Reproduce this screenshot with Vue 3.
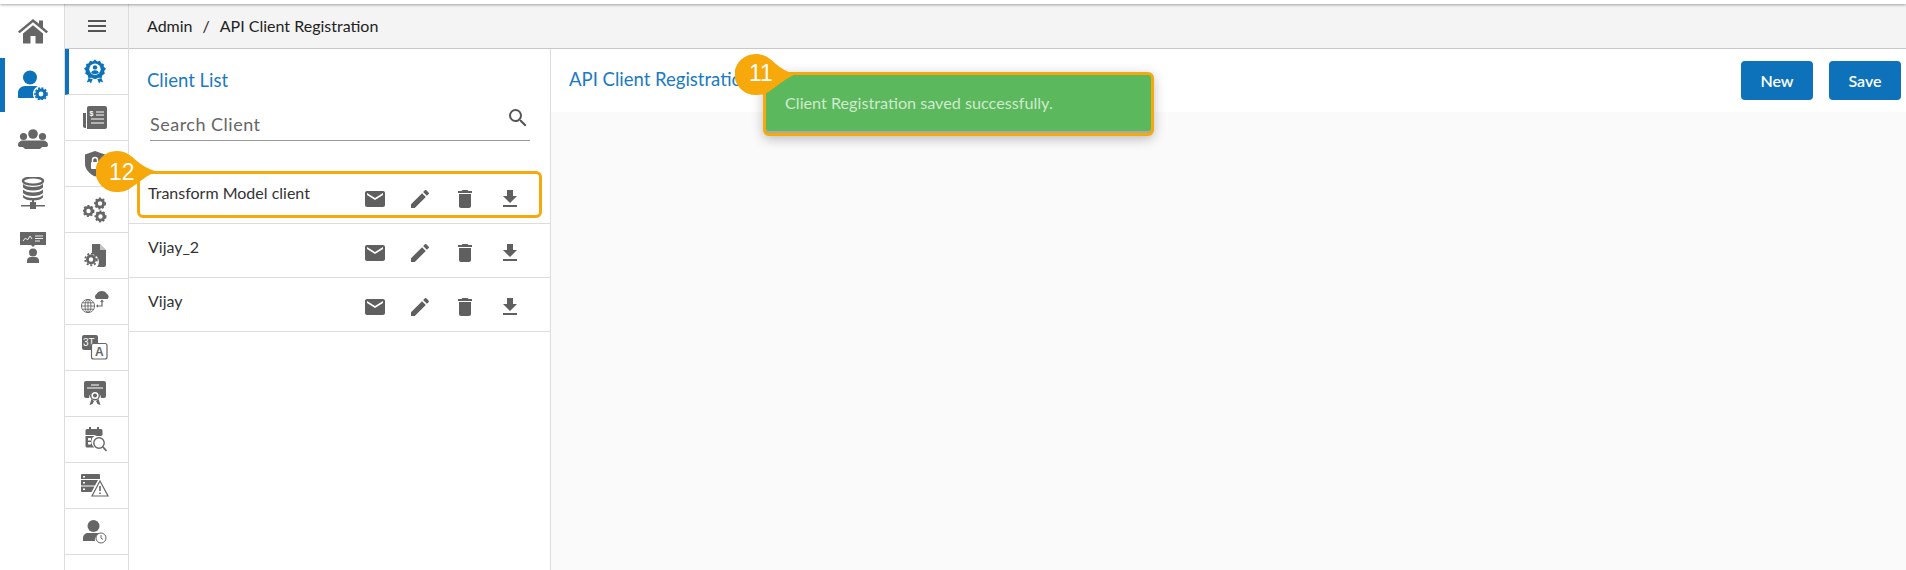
<script setup>
const clients = [
  { name: 'Transform Model client' },
  { name: 'Vijay_2' },
  { name: 'Vijay' }
]
</script>

<template>
  <div class="page">
    <div class="topline"></div>
    <div class="body">
      <aside class="rail">
        <div class="rail-item">
          <svg width="30" height="26" viewBox="0 0 30 26"><path fill="#666" d="M15 1 0 13.500l1.600 1.800L15 4.200l13.400 11.100 1.600-1.800-5-4.200V2.500h-4v3.300zM5 15.500V25.500h7.500V18h5v7.500H25V15.500L15 7.200z"/></svg>
        </div>
        <div class="rail-item active">
          <svg width="30" height="30" viewBox="0 0 30 30"><circle cx="12" cy="7.500" r="7" fill="#0d72b9"/><path fill="#0d72b9" d="M0 28v-5c0-4 3-7 7-7h10c1 0 2 .2 2.800.5A8 8 0 0 0 15 24c0 1.500.4 2.900 1 4z"/><circle cx="23" cy="24" r="4" fill="none" stroke="#0d72b9" stroke-width="3.200"/><circle cx="23" cy="24" r="6" fill="none" stroke="#0d72b9" stroke-width="1.600" stroke-dasharray="2 1.500"/></svg>
        </div>
        <div class="rail-item">
          <svg width="30" height="20" viewBox="0 0 30 20"><circle cx="15" cy="5" r="4.800" fill="#666"/><circle cx="5.500" cy="7.500" r="3.600" fill="#666"/><circle cx="24.500" cy="7.500" r="3.600" fill="#666"/><path fill="#666" d="M0 16c0-3 2.500-4.500 5-4.500h20c2.500 0 5 1.500 5 4.500 0 1.500-1 2-2.500 2h-3.500c-1 1.500-2 2-3 2h-13c-1 0-2-.5-3-2H2.500C1 18 0 17.500 0 16z"/></svg>
        </div>
        <div class="rail-item">
          <svg width="26" height="32" viewBox="0 0 26 32"><ellipse cx="13" cy="4" rx="10" ry="3.600" fill="none" stroke="#666" stroke-width="2.400"/><path fill="#666" d="M3 7c2 2 5 3 10 3s8-1 10-3v3.500c-2 2-5 3-10 3s-8-1-10-3zM3 12.500c2 2 5 3 10 3s8-1 10-3V16c-2 2-5 3-10 3s-8-1-10-3zM3 18c2 2 5 3 10 3s8-1 10-3v2.500c-2 2-5 3-10 3s-8-1-10-3z"/><path fill="#666" d="M10 25h2v-2h2v2h2v3h9v1.600h-9V32h-6v-2.400H1V28h9z"/></svg>
        </div>
        <div class="rail-item">
          <svg width="26" height="32" viewBox="0 0 26 32"><path fill="#666" d="M0 1h26v13H15l-2 2-2-2H0z"/><path fill="none" stroke="#fff" stroke-width=".9" d="M3 10l2.500-3 2 2 2.500-4 2 3"/><path fill="none" stroke="#fff" stroke-width=".9" d="M15 5h8M15 7.500h8M15 10h5"/><circle cx="13" cy="21.500" r="4" fill="#666"/><path fill="#666" d="M7 32v-2.500c0-2.500 2-3.500 4-3.500h4c2 0 4 1 4 3.500V32z"/></svg>
        </div>
      </aside>

      <aside class="subrail">
        <div class="sub-head">
          <svg width="20" height="14" viewBox="0 0 20 14"><path stroke="#555" stroke-width="1.800" d="M1 2h18M1 7h18M1 12h18"/></svg>
        </div>
        <div class="sub-item on">
          <svg width="22" height="25" viewBox="0 0 24 26"><path fill="#0d72b9" d="M12 0l2.500 2 3-.8 1.200 2.900 3 .7-.2 3.100L24 10l-2 2.500.7 3-2.700 1.500-.8 3-3.200-.2L12 21.500 8 19.800l-3.200.2-.8-3-2.700-1.500.7-3L0 10l2.500-2.100-.2-3.100 3-.7L6.500 1.200l3 .8z"/><circle cx="12" cy="10.500" r="6.200" fill="#fff"/><circle cx="12" cy="8.500" r="2.400" fill="#0d72b9"/><path fill="#0d72b9" d="M7.800 15c0-2.300 2-3.300 4.200-3.300s4.200 1 4.200 3.300c-2.500 1.200-6 1.200-8.400 0z"/><path fill="#0d72b9" d="M5 20l-2 5 3-1 1.500 2 2-4.500zM19 20l2 5-3-1-1.500 2-2-4.500z"/></svg>
        </div>
        <div class="sub-item">
          <svg width="24" height="23" viewBox="0 0 24 23"><path fill="#666" d="M0 7h3v15H2a2 2 0 0 1-2-2z"/><path fill="#666" d="M4 2a2 2 0 0 1 2-2h16a2 2 0 0 1 2 2v19a2 2 0 0 1-2 2H4z"/><path stroke="#fff" stroke-width="1.200" d="M13 6h8M13 9h8M8 13h13M8 17h13"/><text x="6.500" y="10" font-size="7" font-weight="700" fill="#fff" font-family="Liberation Sans, sans-serif">$</text></svg>
        </div>
        <div class="sub-item">
          <svg width="22" height="26" viewBox="0 0 22 26"><path fill="#666" d="M11 0l10 3.500v9c0 6-4.500 10.500-10 13-5.500-2.500-10-7-10-13v-9z"/><rect x="7" y="11" width="8" height="7" rx="1" fill="#fff"/><path fill="none" stroke="#fff" stroke-width="1.400" d="M8.500 11V9a2.500 2.500 0 0 1 5 0v2"/></svg>
        </div>
        <div class="sub-item">
          <svg width="24" height="26" viewBox="0 0 24 26"><g fill="none" stroke="#666"><circle cx="5.500" cy="14" r="3.600" stroke-width="2.800"/><circle cx="5.500" cy="14" r="5.200" stroke-width="1.600" stroke-dasharray="2 1.800"/><circle cx="17" cy="6.500" r="3.600" stroke-width="2.800"/><circle cx="17" cy="6.500" r="5.200" stroke-width="1.600" stroke-dasharray="2 1.800"/><circle cx="17.500" cy="19.500" r="3.600" stroke-width="2.800"/><circle cx="17.500" cy="19.500" r="5.200" stroke-width="1.600" stroke-dasharray="2 1.800"/></g></svg>
        </div>
        <div class="sub-item">
          <svg width="22" height="23" viewBox="0 0 22 23"><path fill="#666" d="M8 0h8l6 6v15a2 2 0 0 1-2 2h-7a8 8 0 0 0-5-13z"/><path fill="#fff" d="M16 0v6h6z" opacity=".6"/><circle cx="7" cy="15.500" r="3.600" fill="none" stroke="#666" stroke-width="2.800"/><circle cx="7" cy="15.500" r="5.800" fill="none" stroke="#666" stroke-width="1.800" stroke-dasharray="2 1.800"/></svg>
        </div>
        <div class="sub-item">
          <svg width="28" height="24" viewBox="0 0 28 24"><g fill="none" stroke="#666" stroke-width=".9"><circle cx="7" cy="16" r="6.600"/><ellipse cx="7" cy="16" rx="3" ry="6.600"/><path d="M7 9.400v13.200M.4 16h13.200M1.200 12.800h11.600M1.200 19.200h11.600"/></g><path fill="#666" d="M15 9a3.500 3.500 0 0 1 .5-5A6 6 0 0 1 26 4a3 3 0 0 1 .5 5z"/><path fill="none" stroke="#666" stroke-width="1.200" d="M21 11v5h-5"/><path fill="#666" d="M21 9.500l-2 2.200h4zM15 16l2-1.800v3.600z"/></svg>
        </div>
        <div class="sub-item">
          <svg width="26" height="25" viewBox="0 0 26 25"><rect x="0" y="0" width="16" height="15" rx="2" fill="#666"/><text x="1" y="11" font-size="10" fill="#fff" font-family="Liberation Sans, sans-serif">3T</text><rect x="9.500" y="8.500" width="15.500" height="15.500" rx="2" fill="#fff" stroke="#666" stroke-width="1.200"/><text x="13" y="21" font-size="12" font-weight="700" fill="#666" font-family="Liberation Sans, sans-serif">A</text></svg>
        </div>
        <div class="sub-item">
          <svg width="22" height="25" viewBox="0 0 22 25"><path fill="#666" d="M2 0h18a2 2 0 0 1 2 2v13a2 2 0 0 1-2 2h-3a6 6 0 0 0-12 0H2a2 2 0 0 1-2-2V2a2 2 0 0 1 2-2z"/><path stroke="#fff" stroke-width="1.200" d="M7 4h8M3 7h16"/><circle cx="11" cy="14.500" r="4.300" fill="#fff" stroke="#666" stroke-width="1.400"/><circle cx="11" cy="14.500" r="2" fill="#666"/><path fill="#666" d="M7.500 18l-2 6 3-1 1.500-3zM14.500 18l2 6-3-1-1.500-3z"/></svg>
        </div>
        <div class="sub-item">
          <svg width="23" height="25" viewBox="0 0 23 25"><path fill="#666" d="M3 2h2V0h2v2h6V0h2v2h2a1.500 1.500 0 0 1 1.500 1.500V8H1.500V3.500A1.500 1.500 0 0 1 3 2z"/><path fill="#666" d="M1.500 9h17.200a7 7 0 0 0-8.500 11.500H3A1.500 1.500 0 0 1 1.500 19z"/><path fill="#fff" d="M4 11h3v2.500H4zM8 11h3v2.500H8zM4 15h3v2.500H4zM8 15h2v2.500H8z"/><circle cx="15" cy="16" r="5.200" fill="#fff" stroke="#666" stroke-width="1.400"/><path stroke="#666" stroke-width="1.800" d="M19 20l3.500 4"/></svg>
        </div>
        <div class="sub-item">
          <svg width="28" height="23" viewBox="0 0 28 23"><path fill="#666" d="M1 0h17a1 1 0 0 1 1 1v4H0V1a1 1 0 0 1 1-1zM0 6h17l-3 5.500H0zM0 12.500h13.500L10.500 18H1a1 1 0 0 1-1-1z"/><path fill="#fff" d="M2 2h2v1.500H2zM2 8h2v1.500H2zM2 14.500h2V16H2z"/><path fill="#fff" stroke="#666" stroke-width="1.200" d="M19 7l8 15H11z"/><path stroke="#666" stroke-width="1.600" d="M19 12v5M19 18.500v1.500"/></svg>
        </div>
        <div class="sub-item">
          <svg width="24" height="24" viewBox="0 0 24 24"><circle cx="10.500" cy="6" r="6" fill="#666"/><path fill="#666" d="M0 21v-3c0-3 2.500-5 5-5h10c1 0 1.500 .2 2 .4A7 7 0 0 0 12 21z"/><circle cx="18" cy="18" r="5" fill="#fff" stroke="#666" stroke-width="1"/><path fill="none" stroke="#666" stroke-width="1" d="M18 15v3l2 1.500"/></svg>
        </div>
      </aside>

      <div class="main">
        <header class="crumbs">
          <span>Admin</span><span class="sep">/</span><span>API Client Registration</span>
        </header>
        <div class="panels">
          <section class="list-panel">
            <h2 class="list-title">Client List</h2>
            <div class="search">
              <span class="search-ph">Search Client</span>
              <svg class="search-icon" width="24" height="24" viewBox="0 0 24 24"><path fill="#555" d="M15.500 14h-.79l-.28-.27A6.470 6.470 0 0 0 16 9.500 6.500 6.500 0 1 0 9.500 16c1.610 0 3.090-.59 4.230-1.570l.27.28v.79l5 4.990L20.490 19zm-6 0C7.010 14 5 11.990 5 9.500S7.010 5 9.500 5 14 7.010 14 9.500 11.990 14 9.500 14z"/></svg>
            </div>
            <ul class="clients">
              <li v-for="c in clients" :key="c.name" class="client">
                <span class="client-name">{{ c.name }}</span>
                <div class="actions">
                  <svg width="24" height="24" viewBox="0 0 24 24"><path fill="#5f5f5f" d="M20 4H4c-1.100 0-2 .9-2 2v12c0 1.100.9 2 2 2h16c1.100 0 2-.9 2-2V6c0-1.100-.9-2-2-2zm0 4l-8 5-8-5V6l8 5 8-5z"/></svg>
                  <svg width="24" height="24" viewBox="0 0 24 24"><path fill="#5f5f5f" d="M3 17.250V21h3.750L17.810 9.940l-3.750-3.750zM20.710 7.040a1 1 0 0 0 0-1.410l-2.340-2.340a1 1 0 0 0-1.410 0l-1.830 1.830 3.750 3.750z"/></svg>
                  <svg width="24" height="24" viewBox="0 0 24 24"><path fill="#5f5f5f" d="M6 19c0 1.100.9 2 2 2h8c1.100 0 2-.9 2-2V7H6zM19 4h-3.500l-1-1h-5l-1 1H5v2h14z"/></svg>
                  <svg width="24" height="24" viewBox="0 0 24 24"><path fill="#5f5f5f" d="M19 9h-4V3H9v6H5l7 7zM5 18v2h14v-2z"/></svg>
                </div>
              </li>
            </ul>
          </section>
          <section class="detail">
            <div class="detail-bar">
              <h2 class="detail-title">API Client Registration</h2>
              <div class="btns">
                <button class="btn">New</button>
                <button class="btn">Save</button>
              </div>
            </div>
          </section>
        </div>
      </div>
    </div>

    <div class="hl-row"></div>
    <div class="toast">Client Registration saved successfully.</div>
    <svg class="badge b12" width="62" height="42" viewBox="0 0 60 42" preserveAspectRatio="none"><path fill="#f7a80a" d="M20 0C29 0 34 5 39 9.500 44 14 50 18 58 20.500 50 24 42 31 35 36 30 40 26 41 20 41A20.500 20.500 0 0 1 20 0z"/></svg>
    <span class="badge-n n12">12</span>
    <svg class="badge b11" width="62" height="42" viewBox="0 0 60 42" preserveAspectRatio="none"><path fill="#f7a80a" d="M20 0C29 0 34 5 39 9.500 44 14 50 18 58 20.500 50 24 42 31 35 36 30 40 26 41 20 41A20.500 20.500 0 0 1 20 0z"/></svg>
    <span class="badge-n n11">11</span>
  </div>
</template>

<style>
html, body { margin: 0; background: #fff; }
</style>

<style scoped>
.page {
  position: relative;
  width: 1906px;
  height: 570px;
  overflow: hidden;
  font-family: Lato, sans-serif;
  background: #fff;
  color: #333;
}
.topline {
  position: relative;
  z-index: 2;
  height: 4px;
  background: #fff;
  box-shadow: 0 1px 3px rgba(0, 0, 0, .35);
}
.body {
  display: flex;
  height: 566px;
}
.rail {
  width: 64px;
  flex: none;
  border-right: 1px solid #ddd;
}
.rail-item {
  height: 54px;
  box-sizing: border-box;
  display: flex;
  align-items: center;
  justify-content: center;
  padding-left: 2px;
}
.rail-item.active {
  border-left: 5px solid #0d72b9;
  padding-left: 0;
  padding-right: 4px;
}
.subrail {
  width: 63px;
  flex: none;
  border-right: 1px solid #ddd;
}
.sub-head {
  height: 45px;
  box-sizing: border-box;
  background: #f4f4f4;
  border-bottom: 1px solid #c8c8c8;
  display: flex;
  align-items: center;
  justify-content: center;
}
.sub-item {
  height: 46px;
  box-sizing: border-box;
  border-bottom: 1px solid #ddd;
  display: flex;
  align-items: center;
  justify-content: center;
  padding-right: 3px;
}
.sub-item.on {
  border-left: 4px solid #0d72b9;
  padding-right: 8px;
}
.main {
  flex: 1;
  min-width: 0;
  display: flex;
  flex-direction: column;
}
.crumbs {
  height: 45px;
  box-sizing: border-box;
  background: #f4f4f4;
  border-bottom: 1px solid #c8c8c8;
  display: flex;
  align-items: center;
  padding: 0 0 2px 18px;
  font-size: 16px;
  color: #222;
}
.sep { margin: 0 10px; }
.panels {
  flex: 1;
  display: flex;
  min-height: 0;
}
.list-panel {
  width: 421px;
  flex: none;
  border-right: 1px solid #ddd;
}
.list-title {
  margin: 0;
  padding: 20px 0 0 18px;
  font-size: 18.500px;
  font-weight: 400;
  line-height: 22px;
  color: #1a7ac4;
}
.search {
  position: relative;
  margin: 15px 20px 0 21px;
  height: 35px;
  box-sizing: border-box;
  border-bottom: 1px solid #999;
  padding-top: 7px;
  font-size: 18px;
  letter-spacing: .5px;
  line-height: 22px;
}
.search-ph { color: #666; }
.search-icon {
  position: absolute;
  right: 0;
  top: 0;
}
.clients {
  list-style: none;
  margin: 29px 0 0;
  padding: 0;
}
.client {
  height: 54px;
  box-sizing: border-box;
  border-bottom: 1px solid #ddd;
  display: flex;
  padding: 13px 28px 0 19px;
  justify-content: space-between;
}
.client-name {
  font-size: 16px;
  line-height: 20px;
  color: #333;
}
.actions {
  display: flex;
  gap: 21px;
  padding-top: 4px;
}
.detail {
  flex: 1;
  background: #fafafa;
}
.detail-bar {
  height: 63px;
  background: #fff;
  display: flex;
  justify-content: space-between;
  padding: 12px 5px 0 18px;
  box-sizing: border-box;
}
.detail-title {
  margin: 2px 0 0;
  font-size: 18.500px;
  font-weight: 400;
  line-height: 32px;
  color: #1a7ac4;
}
.btns {
  display: flex;
  gap: 16px;
}
.btn {
  width: 72px;
  height: 39px;
  border: 0;
  border-radius: 4px;
  background: #0d72b9;
  color: #fff;
  font: 600 16px Lato, sans-serif;
}
.hl-row {
  position: absolute;
  left: 137px;
  top: 171px;
  width: 405px;
  height: 47px;
  box-sizing: border-box;
  border: 3px solid #f7a80a;
  border-radius: 6px;
}
.toast {
  position: absolute;
  left: 763px;
  top: 72px;
  width: 391px;
  height: 64px;
  box-sizing: border-box;
  border: 3px solid #f7a80a;
  border-radius: 6px;
  background: #5cb85c;
  color: #cfeacf;
  font-size: 16.200px;
  line-height: 20px;
  padding: 18px 0 0 19px;
  box-shadow: 0 3px 12px rgba(0, 0, 0, .25), inset 0 -2px 0 #a9a9a9;
}
.badge {
  position: absolute;
}
.b12 { left: 96px; top: 151px; }
.b11 { left: 735px; top: 54px; }
.badge-n {
  position: absolute;
  font-family: "Liberation Sans", sans-serif;
  font-size: 23px;
  line-height: 24px;
  color: #fff;
}
.n12 { left: 109px; top: 160px; }
.n11 { left: 749px; top: 61px; }
</style>
